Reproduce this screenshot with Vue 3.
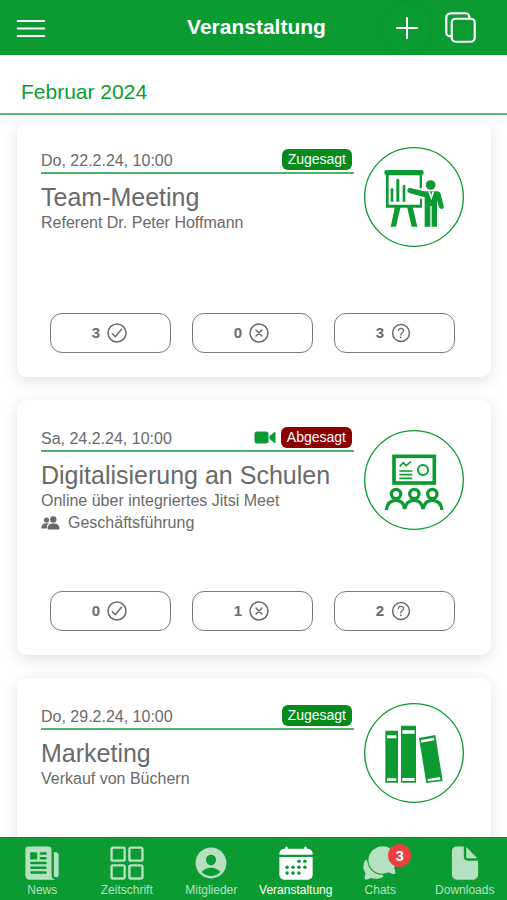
<script setup>
const events = [
  {
    id: 1,
    date: 'Do, 22.2.24, 10:00',
    title: 'Team-Meeting',
    subtitle: 'Referent Dr. Peter Hoffmann',
    status: 'Zugesagt',
    accepted: true,
    picture: 'board',
    responses: [
      { kind: 'yes', count: 3, label: 'Zusagen' },
      { kind: 'no', count: 0, label: 'Absagen' },
      { kind: 'open', count: 3, label: 'Offen' },
    ],
  },
  {
    id: 2,
    date: 'Sa, 24.2.24, 10:00',
    title: 'Digitalisierung an Schulen',
    subtitle: 'Online über integriertes Jitsi Meet',
    group: 'Geschäftsführung',
    video: true,
    status: 'Abgesagt',
    accepted: false,
    picture: 'audience',
    responses: [
      { kind: 'yes', count: 0, label: 'Zusagen' },
      { kind: 'no', count: 1, label: 'Absagen' },
      { kind: 'open', count: 2, label: 'Offen' },
    ],
  },
  {
    id: 3,
    date: 'Do, 29.2.24, 10:00',
    title: 'Marketing',
    subtitle: 'Verkauf von Büchern',
    status: 'Zugesagt',
    accepted: true,
    picture: 'books',
    responses: [],
  },
]

const tabs = [
  { id: 'news', label: 'News' },
  { id: 'magazine', label: 'Zeitschrift' },
  { id: 'members', label: 'Mitglieder' },
  { id: 'events', label: 'Veranstaltung', active: true },
  { id: 'chats', label: 'Chats', badge: 3 },
  { id: 'downloads', label: 'Downloads' },
]
</script>

<template>
  <div class="screen">
    <header class="topbar">
      <button class="menu" type="button" aria-label="Menü">
        <svg width="30" height="20" viewBox="0 0 30 20" fill="none" stroke="currentColor" stroke-width="2.200" stroke-linecap="round">
          <path d="M1.800 3h26.400M1.800 10.500h26.400M1.800 18h26.400" />
        </svg>
      </button>
      <h1 class="heading">Veranstaltung</h1>
      <div class="actions">
        <button class="round shaded" type="button" aria-label="Neu">
          <svg width="22" height="22" viewBox="0 0 22 22" fill="none" stroke="currentColor" stroke-width="2" stroke-linecap="round">
            <path d="M11 1v20M1 11h20" />
          </svg>
        </button>
        <button class="round" type="button" aria-label="Kopieren">
          <svg width="35" height="35" viewBox="0 0 512 512" fill="none" stroke="currentColor" stroke-width="32" stroke-linejoin="round" stroke-linecap="round">
            <rect x="128" y="128" width="336" height="336" rx="57" />
            <path d="M383.5 128l.5-24a56.16 56.16 0 00-56-56H112a64.19 64.19 0 00-64 64v216a56.16 56.16 0 0056 56h24" />
          </svg>
        </button>
      </div>
    </header>

    <main class="content">
      <h2 class="month">Februar 2024</h2>

      <div class="list">
        <article v-for="event in events" :key="event.id" class="card">
          <div class="body">
            <div class="info">
              <div class="text">
                <div class="line">
                  <span class="date">{{ event.date }}</span>
                  <svg v-if="event.video" class="video" width="22" height="13" viewBox="0 0 22 13" fill="currentColor">
                    <rect x="0.500" y="0.500" width="14" height="12" rx="2.500" />
                    <path d="M15.500 5L20.300 1.300Q21.500.6 21.500 2v9q0 1.400-1.200.7L15.500 8z" />
                  </svg>
                  <span class="status" :class="event.accepted ? 'accepted' : 'declined'">{{ event.status }}</span>
                </div>
                <h3 class="title">{{ event.title }}</h3>
                <p class="detail">{{ event.subtitle }}</p>
                <p v-if="event.group" class="detail group">
                  <svg width="19" height="14" viewBox="0 0 19 14" fill="currentColor">
                    <circle cx="5.500" cy="4" r="2.600" />
                    <path d="M0.500 12.500V11c0-2.300 2.300-3.700 5-3.700.9 0 1.700.1 2.400.3C6.600 8.400 5.900 9.500 5.900 11v1.500z" />
                    <circle cx="12.300" cy="3.400" r="3.200" />
                    <path d="M6.700 13.500v-2c0-2.500 2.600-4 5.800-4s5.800 1.500 5.800 4v2z" />
                  </svg>
                  {{ event.group }}
                </p>
              </div>

              <svg v-if="event.picture === 'board'" class="picture" viewBox="27 33 300 300">
                <circle class="ring" cx="177" cy="183" r="148" />
                <rect x="88" y="102" width="118" height="16" rx="7" />
                <path d="M93 116h8v90h94v-18h6v27H93zM194 116h7v40h-7z" />
                <path d="M107 159q4-6 8 0v38h-8zM124 131q5-6 9 0v66h-9zM143 149q4-6 8 0v48h-8z" />
                <path d="M120 212h17l-14 60h-16zM156 212h17l14 60h-17z" />
                <circle cx="227" cy="147" r="14.500" />
                <path d="M208 166h38q9 0 11 8l9 36q1 8-6 9-6 0-8-6l-6-20v79h-16v-62h-4v62h-17v-88l-46-13q-7-3-6-9 2-7 9-6z" />
                <path class="cut" d="M219 166l10 27 9-27-5 0-4 12-4-12z" />
              </svg>

              <svg v-else-if="event.picture === 'audience'" class="picture" viewBox="27 28 300 300">
                <circle class="ring" cx="177" cy="178" r="148" />
                <g class="strokes">
                  <rect x="117" y="107" width="121" height="80" stroke-width="11" />
                  <path d="M134 137l11-11 8 9 15-12M133 151h39M133 162h39M133 173h39" stroke-width="5" />
                  <circle cx="204" cy="148" r="15" stroke-width="6" />
                  <g stroke-width="10">
                    <circle cx="123" cy="220" r="14" />
                    <circle cx="178" cy="220" r="14" />
                    <circle cx="232" cy="220" r="14" />
                    <path d="M94 268q4-29 29-29 23 0 26 26 5-26 28-26t27 26q5-26 28-26 25 0 29 29" />
                  </g>
                </g>
              </svg>

              <svg v-else class="picture" viewBox="27 25 300 300">
                <circle class="ring" cx="177" cy="175" r="148" />
                <path d="M91 108h38v156H91zM138 93h45v171h-45zM192 130l49-9 22 138-49 6z" />
                <path class="cut" d="M96 122h28v9H96zM96 251h28v8H96zM142 107h37v10h-37zM142 250h37v9h-37zM198 136l39-7 1 8-39 7zM218 253l37-6 1 8-37 5z" />
              </svg>
            </div>
          </div>

          <div v-if="event.responses.length" class="responses">
            <button v-for="item in event.responses" :key="item.kind" class="response" type="button" :aria-label="item.label">
              {{ item.count }}
              <svg width="24" height="24" viewBox="0 0 512 512" fill="none" stroke="currentColor" stroke-width="32" stroke-linecap="round" stroke-linejoin="round">
                <template v-if="item.kind === 'yes'">
                  <circle cx="256" cy="256" r="192" />
                  <path d="M352 176L217.600 336 160 272" />
                </template>
                <template v-else-if="item.kind === 'no'">
                  <circle cx="256" cy="256" r="192" />
                  <path d="M320 320L192 192M192 320l128-128" />
                </template>
                <template v-else>
                  <circle cx="256" cy="256" r="180" />
                  <path d="M200 202.290s.84-17.500 19.570-32.570C230.680 160.770 244 158.180 256 158c10.930-.14 20.690 1.670 26.530 4.450 10 4.760 29.470 16.380 29.470 41.090 0 26-17 37.810-36.370 50.800S251 281.430 251 296" stroke-width="28" />
                  <circle cx="250" cy="348" r="20" fill="currentColor" stroke="none" />
                </template>
              </svg>
            </button>
          </div>
        </article>
      </div>
    </main>

    <nav class="tabs">
      <a v-for="tab in tabs" :key="tab.id" href="#" class="tab" :class="{ active: tab.active }">
        <span class="icon">
          <svg width="38" height="38" viewBox="0 0 512 512" fill="currentColor">
            <template v-if="tab.id === 'news'">
              <path d="M439.910 112h-23.820a.09.09 0 00-.09.09V416a32 32 0 0064 0V152.090A40.090 40.090 0 00439.910 112z" />
              <path d="M384 416V72a40 40 0 00-40-40H72a40 40 0 00-40 40v352a56 56 0 0056 56h342.850a1.140 1.140 0 00.3-2.250A64.110 64.110 0 01384 416z" />
              <rect class="hole" x="96" y="112" width="96" height="96" rx="16" />
              <path class="groove" d="M240 128h64M240 192h64M112 256h192M112 320h192M112 384h192" />
            </template>
            <g v-else-if="tab.id === 'magazine'" fill="none" stroke="currentColor" stroke-width="32">
              <rect x="48" y="48" width="176" height="176" rx="20" />
              <rect x="288" y="48" width="176" height="176" rx="20" />
              <rect x="48" y="288" width="176" height="176" rx="20" />
              <rect x="288" y="288" width="176" height="176" rx="20" />
            </g>
            <path v-else-if="tab.id === 'members'" d="M256 48C141.310 48 48 141.310 48 256s93.310 208 208 208 208-93.310 208-208S370.690 48 256 48zm-50.220 116.820C218.450 151.390 236.280 144 256 144s37.390 7.440 50.110 20.940c12.890 13.680 19.160 32.060 17.680 51.820C320.830 256 290.430 288 256 288s-64.890-32-67.790-71.250c-1.470-19.920 4.790-38.360 17.570-51.930zM256 432a175.490 175.490 0 01-126-53.220 122.910 122.910 0 0135.140-33.440C190.630 329 222.890 320 256 320s65.370 9 90.830 25.340A122.870 122.870 0 01382 378.780 175.450 175.450 0 01256 432z" />
            <template v-else-if="tab.id === 'events'">
              <path d="M480 128a64 64 0 00-64-64h-16V48a16 16 0 00-32 0v16H144V48a16 16 0 00-32 0v16H96a64 64 0 00-64 64v12a4 4 0 004 4h440a4 4 0 004-4zM32 416a64 64 0 0064 64h320a64 64 0 0064-64V179a3 3 0 00-3-3H35a3 3 0 00-3 3z" />
              <g class="hole">
                <circle cx="296" cy="232" r="24" />
                <circle cx="376" cy="232" r="24" />
                <circle cx="136" cy="312" r="24" />
                <circle cx="216" cy="312" r="24" />
                <circle cx="296" cy="312" r="24" />
                <circle cx="376" cy="312" r="24" />
                <circle cx="136" cy="392" r="24" />
                <circle cx="216" cy="392" r="24" />
                <circle cx="296" cy="392" r="24" />
              </g>
            </template>
            <template v-else-if="tab.id === 'chats'">
              <path d="M439.900 405.600a26.770 26.770 0 01-9.590-2l-56.780-20.130-.42-.17a9.880 9.880 0 00-3.910-.76 10.320 10.320 0 00-3.620.66c-1.380.52-13.810 5.190-26.850 8.770-7.070 1.940-31.680 8.270-51.430 8.270-50.480 0-97.680-19.400-132.890-54.630A183.380 183.380 0 01100.300 215.100a175.900 175.900 0 014.060-37.580c8.790-40.620 32.070-77.570 65.550-104A194.760 194.760 0 01290.300 30.500c52.210 0 100.860 20 137 56.180 34.160 34.270 52.880 79.330 52.730 126.870a177.860 177.860 0 01-30.300 99.150l-.19.28-.74 1c-.17.23-.34.45-.5.68l-.15.27a21.630 21.630 0 00-1.080 2.090l15.740 55.940a26.420 26.420 0 011.120 7.430 24 24 0 01-24.030 25.210z" />
              <path d="M299.870 425.390a15.740 15.740 0 00-10.290-8.100c-5.780-1.530-12.520-1.270-17.670-1.650a201.780 201.780 0 01-128.820-58.750A199.210 199.210 0 0186.400 244.160C85 234.420 85 232 85 232a16 16 0 00-28-10.580s-7.880 8.580-11.600 17.190a162.090 162.090 0 0011 150.060C59 393 59 395 58.420 399.500c-2.730 14.110-7.510 39-10 51.910a24 24 0 008 22.920l.46.39A24.340 24.340 0 0072 480a23.420 23.420 0 009-1.790l53.510-20.650a8.050 8.050 0 015.720 0c21.070 7.840 43 12 63.780 12a176 176 0 0074.910-16.660c5.460-2.560 14-5.340 19-11.120a15 15 0 001.950-16.390z" />
            </template>
            <template v-else>
              <path d="M428 224H288a48 48 0 01-48-48V36a4 4 0 00-4-4h-92a64 64 0 00-64 64v320a64 64 0 0064 64h224a64 64 0 0064-64V228a4 4 0 00-4-4z" />
              <path d="M419.220 188.590L275.410 44.780a2 2 0 00-3.410 1.410V176a16 16 0 0016 16h129.810a2 2 0 001.410-3.410z" />
            </template>
          </svg>
          <span v-if="tab.badge" class="badge">{{ tab.badge }}</span>
        </span>
        <span class="label">{{ tab.label }}</span>
      </a>
    </nav>
  </div>
</template>

<style>
body {
  margin: 0;
  background: #fff;
}
</style>

<style scoped>
.screen {
  --green: #0c9b33;
  display: flex;
  flex-direction: column;
  height: 100vh;
  font-family: "Liberation Sans", Arial, sans-serif;
  font-size: 16px;
  line-height: 22px;
  color: #6a6a6a;
}

h1,
h2,
h3,
p {
  margin: 0;
  font-weight: 400;
}

button {
  margin: 0;
  padding: 0;
  border: 0;
  background: none;
  color: inherit;
  font: inherit;
}

svg {
  display: block;
  flex: none;
}

.topbar {
  display: grid;
  grid-template-columns: 1fr auto 1fr;
  align-items: center;
  flex: none;
  height: 55px;
  padding: 0 16px;
  background: var(--green);
  color: #fff;
}

.menu {
  justify-self: start;
}

.heading {
  padding: 0 0 2px 6px;
  font-size: 21px;
  line-height: 24px;
  font-weight: 700;
}

.actions {
  display: flex;
  justify-content: flex-end;
  gap: 7px;
  padding-right: 7px;
}

.round {
  display: grid;
  place-items: center;
  width: 47px;
  height: 47px;
  border-radius: 50%;
}

.shaded {
  box-shadow: 0 0 8px rgba(0, 60, 10, 0.1);
}

.content {
  flex: 1;
  min-height: 0;
  overflow-y: auto;
  scrollbar-width: none;
}

.month {
  padding: 25px 21px 9px;
  border-bottom: 2px solid #5dbb75;
  font-size: 21px;
  line-height: 24px;
  color: var(--green);
}

.list {
  display: flex;
  flex-direction: column;
  gap: 23px;
  padding: 7px 16px 24px 17px;
}

.card {
  padding: 25px 27px 24px 24px;
  border-radius: 10px;
  background: #fff;
  box-shadow: 0 4px 16px rgba(0, 0, 0, 0.12);
}

.body {
  min-height: 166px;
}

.info {
  display: flex;
  align-items: flex-start;
  gap: 10px;
}

.text {
  flex: 1;
  min-width: 0;
}

.line {
  display: flex;
  align-items: center;
  height: 25px;
  border-bottom: 2px solid #4db568;
}

.date {
  flex: 1;
  padding-top: 2px;
}

.video {
  margin-right: 5px;
  color: var(--green);
}

.status {
  margin-right: 2px;
  padding: 0 6px;
  border-radius: 6px;
  font-size: 14px;
  line-height: 21px;
  color: #fff;
}

.accepted {
  background: #068a1c;
}

.declined {
  background: #8b0000;
}

.title {
  margin-top: 8px;
  font-size: 25px;
  line-height: 30px;
  white-space: nowrap;
}

.group {
  display: flex;
  align-items: center;
  gap: 8px;
}

.picture {
  align-self: center;
  width: 100px;
  height: 100px;
  fill: var(--green);
}

.ring {
  fill: none;
  stroke: var(--green);
  stroke-width: 4;
}

.strokes {
  fill: none;
  stroke: var(--green);
}

.cut {
  fill: #fff;
}

.responses {
  display: flex;
  gap: 21px;
  padding: 0 9px;
}

.response {
  display: flex;
  flex: 1;
  align-items: center;
  justify-content: center;
  gap: 5px;
  height: 40px;
  border: 1px solid #7a7a7a;
  border-radius: 12px;
  font-size: 15px;
  font-weight: 700;
}

.tabs {
  display: grid;
  grid-template-columns: repeat(6, 1fr);
  flex: none;
  padding: 6px 0 3px;
  border-top: 1px solid #0a8a2d;
  background: var(--green);
}

.tab {
  display: flex;
  flex-direction: column;
  align-items: center;
  gap: 1px;
  min-width: 0;
  color: #b6e1c1;
  text-decoration: none;
}

.active {
  color: #fff;
}

.icon {
  position: relative;
}

.hole {
  fill: var(--green);
}

.groove {
  fill: none;
  stroke: var(--green);
  stroke-width: 32;
  stroke-linecap: round;
}

.badge {
  position: absolute;
  top: 0;
  left: 27px;
  width: 23px;
  border-radius: 50%;
  background: #eb3f43;
  font-size: 15px;
  line-height: 23px;
  font-weight: 700;
  text-align: center;
  color: #fff;
}

.label {
  font-size: 12px;
  line-height: 14px;
}
</style>
